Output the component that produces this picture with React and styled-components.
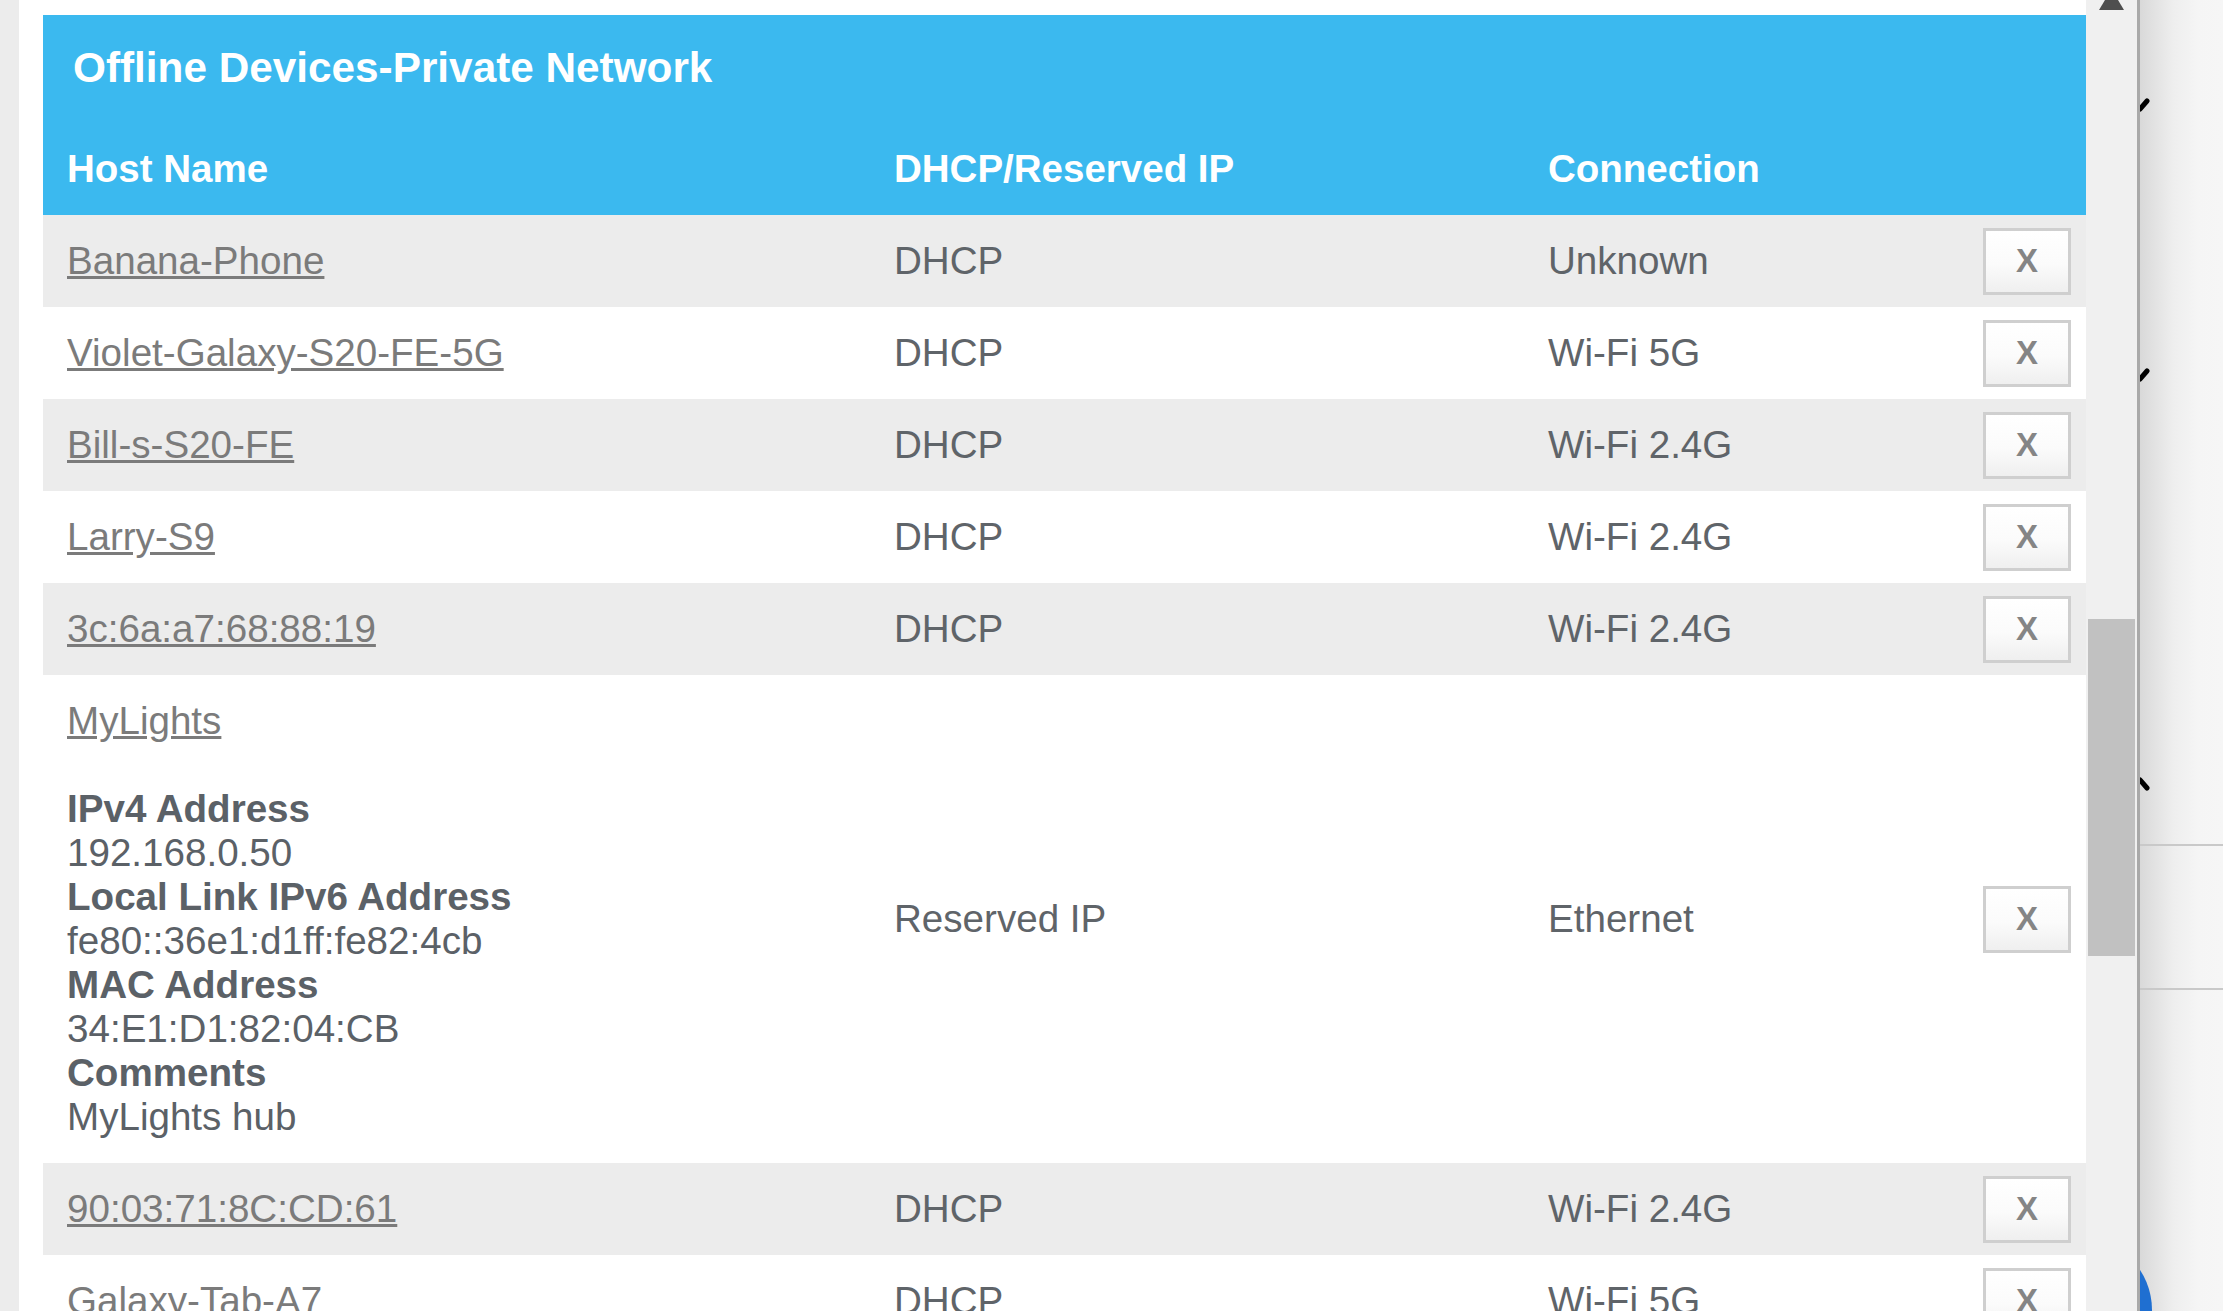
import React from "react";
import styled, { createGlobalStyle } from "styled-components";

const GlobalStyle = createGlobalStyle`
  html, body {
    margin: 0;
    padding: 0;
    height: 100%;
    overflow: hidden;
    background: #fff;
  }
  body {
    font-family: "Liberation Sans", Arial, sans-serif;
  }
`;

const Page = styled.div`
  display: flex;
  height: 100vh;
  overflow: hidden;
`;

const LeftStrip = styled.div`
  flex: none;
  width: 19px;
  background: #ececec;
`;

const Content = styled.div`
  flex: none;
  width: 2067px;
  box-sizing: border-box;
  padding: 15px 0 0 24px;
  background: #fff;
  overflow: hidden;
`;

const Table = styled.table`
  width: 2043px;
  table-layout: fixed;
  border-collapse: collapse;
  border-spacing: 0;
`;

const TitleCell = styled.th`
  background: #3bb9ef;
  color: #fff;
  font-size: 42.3px;
  line-height: 48px;
  font-weight: bold;
  text-align: left;
  padding: 29px 24px 31px 30px;
`;

const HeadCell = styled.th`
  background: #3bb9ef;
  color: #fff;
  font-size: 38.5px;
  line-height: 44px;
  font-weight: bold;
  text-align: left;
  padding: 24px 23px 24px 24px;
`;

const Row = styled.tr`
  background: ${(p) => (p.$shaded ? "#ececec" : "#fff")};
`;

const Cell = styled.td`
  font-size: 38.6px;
  line-height: 44px;
  color: #5f6469;
  padding: 24px 23px 24px 24px;
  vertical-align: middle;
  white-space: nowrap;
`;

const ActionCell = styled.td`
  padding: 0 15px 0 0;
  text-align: right;
  vertical-align: middle;
`;

const HostLink = styled.a`
  color: #7b7b7b;
  text-decoration: underline;
  cursor: pointer;
`;

const Details = styled.div`
  margin-top: 44px;
  color: #5b6167;
`;

const Label = styled.div`
  font-weight: bold;
`;

const Value = styled.div``;

const RemoveButton = styled.button`
  box-sizing: border-box;
  width: 88px;
  height: 67px;
  display: inline-flex;
  align-items: center;
  justify-content: center;
  vertical-align: middle;
  border: 3px solid #cfcfcf;
  background: linear-gradient(to bottom, #ffffff 0%, #fbfbfb 55%, #efefef 100%);
  color: #858585;
  font-family: "Liberation Sans", Arial, sans-serif;
  font-size: 33px;
  font-weight: bold;
  padding: 0;
  cursor: pointer;
`;

const ScrollTrack = styled.div`
  flex: none;
  width: 51px;
  background: #f0f0f0;
  display: flex;
  flex-direction: column;
  align-items: center;
`;

const Thumb = styled.div`
  width: 47px;
  height: 337px;
  margin-top: 609px;
  background: #c1c1c1;
`;

const SidePanel = styled.div`
  position: relative;
  flex: 1;
  display: flex;
  flex-direction: column;
  border-left: 3px solid #a9a9a9;
  background: linear-gradient(to right, #d9d9d9 0%, #eeeeee 40%, #f5f5f5 70%, #f6f6f6 100%);
  overflow: hidden;
`;

const PanelSection = styled.div`
  flex: none;
  height: ${(p) => p.$h}px;
  border-bottom: 2px solid #c9c9c9;
`;

const PanelDecor = styled.svg`
  position: absolute;
  top: 0;
  left: 0;
  width: 100%;
  height: 100%;
  pointer-events: none;
`;

const devices = [
  { name: "Banana-Phone", ip: "DHCP", conn: "Unknown" },
  { name: "Violet-Galaxy-S20-FE-5G", ip: "DHCP", conn: "Wi-Fi 5G" },
  { name: "Bill-s-S20-FE", ip: "DHCP", conn: "Wi-Fi 2.4G" },
  { name: "Larry-S9", ip: "DHCP", conn: "Wi-Fi 2.4G" },
  { name: "3c:6a:a7:68:88:19", ip: "DHCP", conn: "Wi-Fi 2.4G" },
  {
    name: "MyLights",
    ip: "Reserved IP",
    conn: "Ethernet",
    details: [
      ["IPv4 Address", "192.168.0.50"],
      ["Local Link IPv6 Address", "fe80::36e1:d1ff:fe82:4cb"],
      ["MAC Address", "34:E1:D1:82:04:CB"],
      ["Comments", "MyLights hub"],
    ],
  },
  { name: "90:03:71:8C:CD:61", ip: "DHCP", conn: "Wi-Fi 2.4G" },
  { name: "Galaxy-Tab-A7", ip: "DHCP", conn: "Wi-Fi 5G" },
];

function DeviceRow({ device, index }) {
  return (
    <Row $shaded={index % 2 === 0}>
      <Cell>
        <HostLink>{device.name}</HostLink>
        {device.details && (
          <Details>
            {device.details.map(([label, value]) => (
              <React.Fragment key={label}>
                <Label>{label}</Label>
                <Value>{value}</Value>
              </React.Fragment>
            ))}
          </Details>
        )}
      </Cell>
      <Cell>{device.ip}</Cell>
      <Cell>{device.conn}</Cell>
      <ActionCell>
        <RemoveButton>X</RemoveButton>
      </ActionCell>
    </Row>
  );
}

export default function App() {
  return (
    <>
      <GlobalStyle />
      <Page>
        <LeftStrip />
        <Content>
          <Table>
            <colgroup>
              <col style={{ width: 827 }} />
              <col style={{ width: 654 }} />
              <col style={{ width: 430 }} />
              <col style={{ width: 132 }} />
            </colgroup>
            <thead>
              <tr>
                <TitleCell colSpan={4}>Offline Devices-Private Network</TitleCell>
              </tr>
              <tr>
                <HeadCell>Host Name</HeadCell>
                <HeadCell>DHCP/Reserved IP</HeadCell>
                <HeadCell>Connection</HeadCell>
                <HeadCell />
              </tr>
            </thead>
            <tbody>
              {devices.map((d, i) => (
                <DeviceRow key={d.name} device={d} index={i} />
              ))}
            </tbody>
          </Table>
        </Content>
        <ScrollTrack>
          <svg width="25" height="10" viewBox="0 0 25 10">
            <polygon points="0,10 25,10 19,0 6,0" fill="#4f4f4f" />
          </svg>
          <Thumb />
        </ScrollTrack>
        <SidePanel>
          <PanelSection $h={844} />
          <PanelSection $h={142} />
          <PanelDecor>
            <g stroke="#000" strokeWidth="5" strokeLinecap="round">
              <line x1="0" y1="109" x2="7" y2="101" />
              <line x1="0" y1="379" x2="7" y2="371" />
              <line x1="0" y1="780" x2="7" y2="788" />
            </g>
            <circle cx="-61" cy="1310" r="73" fill="#1f6fd1" />
          </PanelDecor>
        </SidePanel>
      </Page>
    </>
  );
}
